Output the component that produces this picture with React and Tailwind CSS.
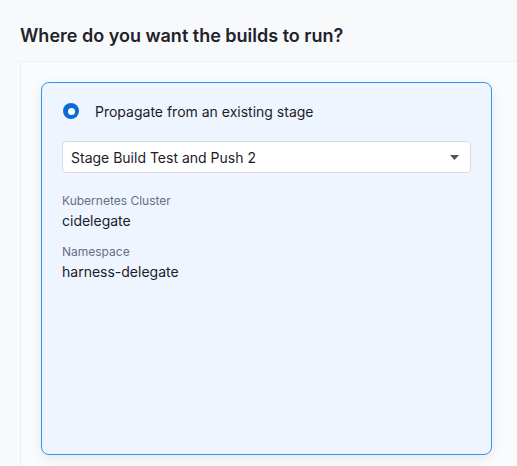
export default function App() {
  return (
    <div className="h-[466px] w-[517px] overflow-hidden bg-[#f8f9fb] pl-5 pt-[22px] font-['Inter',sans-serif] text-[#22222a]">
      <h2 className="text-[18px] font-semibold leading-[28px] text-[#22222a]">
        Where do you want the builds to run?
      </h2>
      <div className="mt-[11px] h-[420px] border-l border-t border-[#eceef2] bg-[#fafbfc] pl-5 pt-5">
        <div className="flex h-[373px] w-[451px] flex-col rounded-lg border border-[#2f95f5] bg-[#eef5fe] px-5 pt-[18px] shadow-[0_4px_14px_rgba(0,0,0,0.08)]">
          {/* Radio */}
          <label className="flex h-5 items-center gap-4">
            <span className="ml-px flex h-4 w-4 items-center justify-center rounded-full bg-[#0b6bd4]">
              <span className="h-[7px] w-[7px] rounded-full bg-white" />
            </span>
            <span className="text-[14px] text-[#1c1c28]">Propagate from an existing stage</span>
          </label>

          {/* Select */}
          <div className="mt-[20px] flex h-[32px] items-center justify-between rounded-[4px] border border-[#d9dae6] bg-white pl-[8px] pr-[11px]">
            <span className="text-[14px] text-[#1c1c28]">Stage Build Test and Push 2</span>
            <svg width="9" height="5" viewBox="0 0 9 5">
              <path d="M0 0h9L4.5 5z" fill="#4f5162" />
            </svg>
          </div>

          <div className="mt-[20px] text-[12px] leading-[16px] text-[#6b6d85]">Kubernetes Cluster</div>
          <div className="mt-[2px] text-[14px] leading-[20px] text-[#1c1c28]">cidelegate</div>

          <div className="mt-[13px] text-[12px] leading-[16px] text-[#6b6d85]">Namespace</div>
          <div className="mt-[2px] text-[14px] leading-[20px] text-[#1c1c28]">harness-delegate</div>
        </div>
      </div>
    </div>
  );
}
